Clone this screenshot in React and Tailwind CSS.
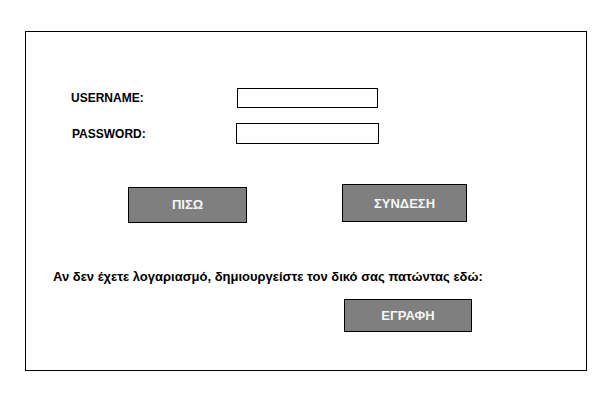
export default function App() {
  const font = { fontFamily: '"Liberation Sans", Arial, sans-serif' }
  return (
    <div className="w-[613px] h-[400px] bg-white text-black font-bold text-[12px]" style={font}>
      <div className="relative top-[31px] left-[25px] w-[562px] h-[340px] border border-black">
        <div className="flex flex-col pt-[56px]">
          <div className="flex items-center h-[20px]">
            <div className="w-[211px] pl-[45px] leading-none">USERNAME:</div>
            <div className="w-[141px] h-[20px] border border-black" />
          </div>
          <div className="flex items-center h-[21px] mt-[15px]">
            <div className="w-[210px] pl-[46px] leading-none">PASSWORD:</div>
            <div className="w-[143px] h-[21px] border border-black" />
          </div>
          <div className="flex items-start mt-[40px] text-[13px]">
            <div className="ml-[102px] mt-[3px] w-[119px] h-[36px] flex items-center justify-center bg-[#7f7f7f] border border-black text-[#f6f6f6]">
              ΠΙΣΩ
            </div>
            <div className="ml-[95px] w-[125px] h-[38px] flex justify-center pt-[9px] bg-[#7f7f7f] border border-black text-[#f6f6f6]">
              ΣΥΝΔΕΣΗ
            </div>
          </div>
          <div className="mt-[46px] ml-[27px] h-[16px] leading-[16px] text-[13px]">
            Αν δεν έχετε λογαριασμό, δημιουργείστε τον δικό σας πατώντας εδώ:
          </div>
          <div className="mt-[14px] ml-[318px] w-[128px] h-[33px] flex items-center justify-center bg-[#7f7f7f] border border-black text-[#f6f6f6] text-[13px]">
            ΕΓΡΑΦΗ
          </div>
        </div>
      </div>
    </div>
  )
}
